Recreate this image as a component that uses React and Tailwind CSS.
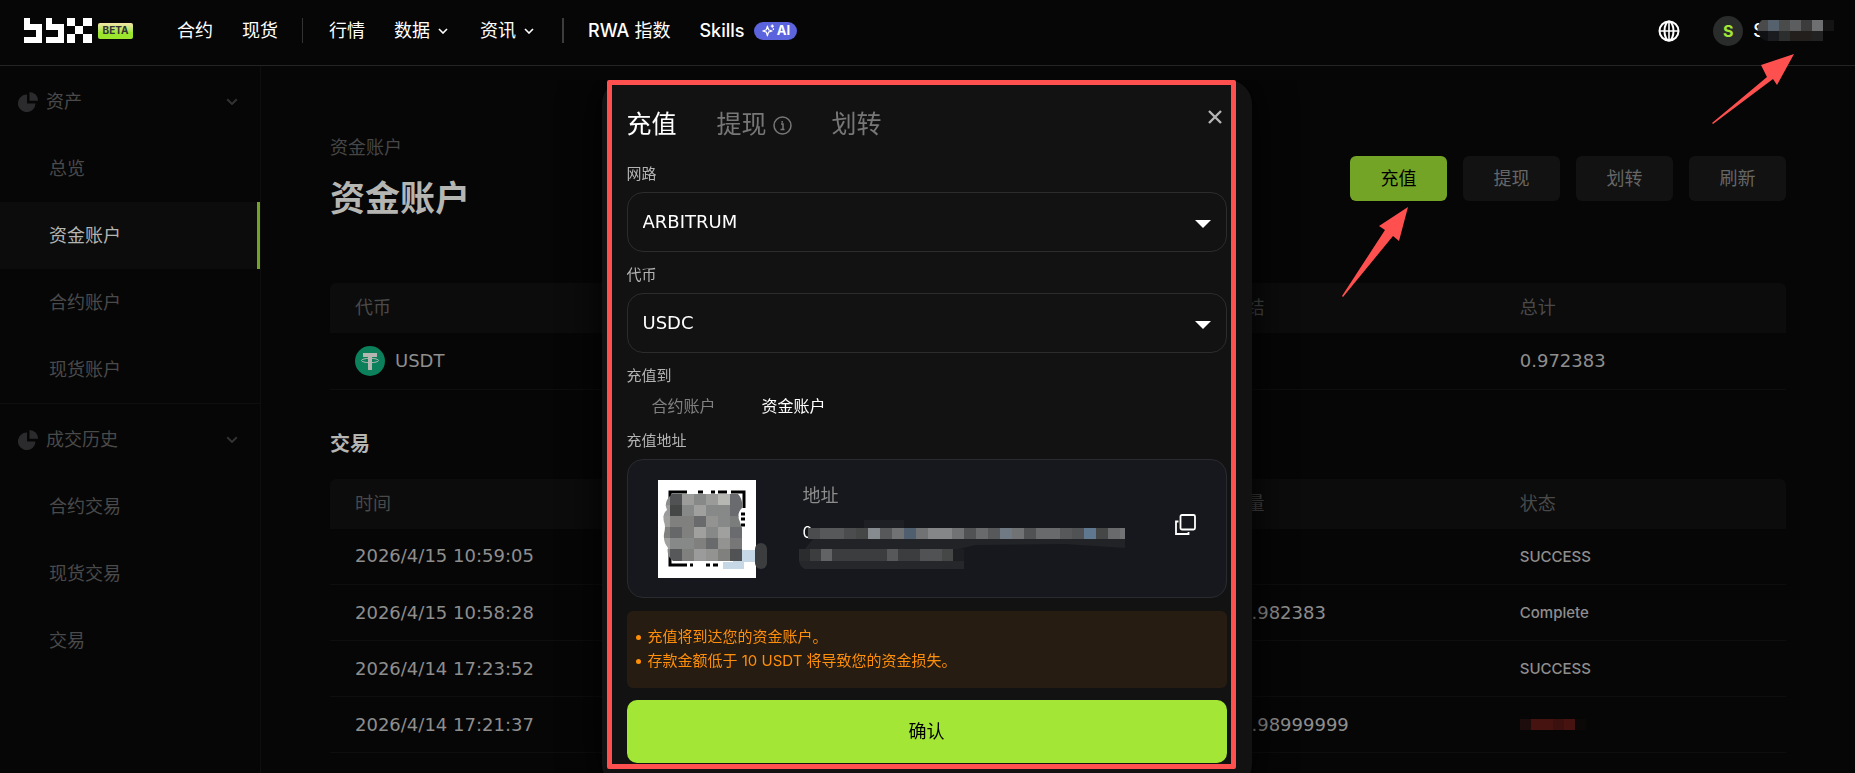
import React, { useState } from "react";

const assetLinks = ["总览", "资金账户", "合约账户", "现货账户"];
const historyLinks = ["合约交易", "现货交易", "交易"];

const records = [
  { time: "2026/4/15 10:59:05", amount: "10", status: "SUCCESS" },
  { time: "2026/4/15 10:58:28", amount: "16.982383", status: "Complete" },
  { time: "2026/4/14 17:23:52", amount: "10", status: "SUCCESS" },
  { time: "2026/4/14 17:21:37", amount: "16.98999999", status: "" },
];

// rows of grey tiles, one shade per tile
const nameTiles = [
  ["#4a4a4a", "#56616e", "#4a4b4b", "#5c5d5e", "#3c3c3c", "#6e6f70", "#141414"],
  ["#101114", "#1b1c20", "#2c2d2d", "#221f1c", "#221f1c", "#222222", "#060606"],
];
const qrTiles = [
  ["#8a8b8b", "#515253", "#9c9d9b", "#878888", "#9b9c9a", "#b6b6b3", "#6a6b6e"],
  ["#9a9b9a", "#454646", "#878888", "#a0a19f", "#878888", "#878888", "#6a6b6e"],
  ["#9fa09e", "#80807e", "#80807e", "#696a6c", "#939492", "#878888", "#7b7c7c"],
  ["#80807e", "#666769", "#80807e", "#a0a19f", "#878888", "#a0a19f", "#6a6b6e"],
  ["#a0a19f", "#878888", "#878888", "#80807e", "#696a6c", "#939492", "#777777"],
  ["#878888", "#57585a", "#80807e", "#9a9b9a", "#939492", "#80807e", "#515253"],
];
const addressTiles = [
  "#4b4c4e", "#57585a", "#57585a", "#4b4c4e", "#454646", "#868b8f", "#57585a",
  "#717274", "#4f5f70", "#717274", "#858687", "#858687", "#717274", "#515253",
  "#696a6c", "#57585a", "#6f7a85", "#717274", "#515253", "#696a6c", "#696a6c",
  "#57585a", "#515253", "#5f7890", "#454646", "#696a6c", "#717274",
];
const addressTiles2 = [
  "#2b2c2e", "#3c3d3e", "#626365", "#3c3d3e", "#3c3d3e", "#3c3d3e", "#3c3d3e",
  "#3c3d3e", "#57585a", "#3c3d3e", "#3c3d3e", "#515253", "#515253", "#454646",
  "#1d1e22",
];

function Tiles({ colors, size, x = 0, y = 0, h = size }) {
  return colors.map((c, i) => (
    <rect key={i} x={x + i * size} y={y} width={size} height={h} fill={c} />
  ));
}

function Logo() {
  return (
    <svg width="68" height="25" viewBox="0 0 68 25" fill="#fff" aria-label="bbx">
      <path d="M0 0h6v6h12v19H0v-6h12v-7H0z" />
      <path d="M22 0h6v6h12v19H22v-6h12v-7H22z" />
      <path d="M43 0h8v8h8V0h9v8h-9v8h9v9h-9v-9h-8v9h-8v-9h8V8h-8z" />
    </svg>
  );
}

function Chevron({ className }) {
  return (
    <svg viewBox="0 0 10 6" fill="none" stroke="currentColor" strokeWidth="1.6" className={className}>
      <path d="M1 1l4 4 4-4" />
    </svg>
  );
}

function Pie() {
  return (
    <svg width="20" height="20" viewBox="0 0 20 20" fill="#2b2b2d">
      <path d="M9 2.5v9h8.5A8.8 8.8 0 1 1 9 2.5z" />
      <path d="M11.500 0A8.500 8.500 0 0 1 20 8.800h-8.500z" />
    </svg>
  );
}

function Header() {
  return (
    <header className="flex h-[66px] items-center border-b border-[#242424] pr-[21px] pb-3.5 pl-6 text-lg text-white">
      <a href="#home" className="mt-2.5 flex items-center">
        <Logo />
        <span className="ml-1.5 flex h-4 w-[35px] items-center justify-center rounded-xs bg-linear-to-b from-[#f5e6a8] to-[#9be52d] to-60% text-[10px] font-bold text-[#333]">
          BETA
        </span>
      </a>
      <nav className="mt-2.5 ml-11 flex items-center">
        <a href="#futures">合约</a>
        <a href="#spot" className="ml-[29px]">现货</a>
        <span className="mr-[26px] ml-6 h-[25px] w-px bg-[#333]" />
        <a href="#markets">行情</a>
        <button className="ml-[29px] flex items-center gap-2">
          数据 <Chevron className="w-2.5" />
        </button>
        <button className="ml-8 flex items-center gap-2">
          资讯 <Chevron className="w-2.5" />
        </button>
        <span className="mr-6 ml-7 h-[25px] w-0.5 bg-[#3c3c3c]" />
        <a href="#rwa">
          <span className="font-medium">RWA</span> 指数
        </a>
        <a href="#skills" className="ml-[29px] flex items-center gap-2.5 font-medium">
          Skills
          <span className="flex h-[18px] w-[43px] items-center justify-center gap-0.5 rounded-full bg-[#5b63dd] text-[13px] font-bold">
            <svg width="13" height="13" viewBox="0 0 24 24" fill="none" stroke="currentColor" strokeWidth="2.2" strokeLinejoin="round">
              <path d="M10 4l2 6.500L18.500 13l-6.500 2L10 22l-2-7-6.500-2L8 10.500z" />
              <path d="M19 1v6M16 4h6M21 8v3" />
            </svg>
            AI
          </span>
        </a>
      </nav>
      <div className="mt-2.5 ml-auto flex items-center">
        <button aria-label="language">
          <svg width="22" height="22" viewBox="0 0 22 22" fill="none" stroke="currentColor" strokeWidth="2">
            <circle cx="11" cy="11" r="9.500" />
            <ellipse cx="11" cy="11" rx="4.500" ry="9.500" />
            <path d="M11 1v20M1.500 11h19" strokeWidth="1.600" />
          </svg>
        </button>
        <span className="ml-[33px] flex size-[30px] items-center justify-center rounded-full bg-[#2a2b2b] text-base font-bold text-[#a3e635]">
          S
        </span>
        <span className="ml-2.5 flex items-center font-medium">
          S
          <svg width="77" height="21" viewBox="0 0 77 21" className="-ml-2">
            <clipPath id="name">
              <path d="M5 0h72v21H10A12 12 0 0 1 5 0z" />
            </clipPath>
            <g clipPath="url(#name)">
              <Tiles colors={nameTiles[0]} size={11} />
              <Tiles colors={nameTiles[1]} size={11} y={11} />
            </g>
          </svg>
        </span>
      </div>
    </header>
  );
}

function SideGroup({ title, links, active }) {
  return (
    <div className="border-b border-[#0e0e0e] pt-0.5 last:border-0">
      <button className="flex h-[67px] w-full items-center gap-2 pr-[22px] pl-[18px]">
        <Pie />
        {title}
        <Chevron className="ml-auto w-3 text-[#333]" />
      </button>
      {links.map((link) => (
        <a
          key={link}
          href={`#${link}`}
          className={
            link === active
              ? "flex h-[67px] items-center border-r-3 border-[#74a426] bg-[#0c0c0c] pl-[49px] text-[#b4b4b2]"
              : "flex h-[67px] items-center pl-[49px]"
          }
        >
          {link}
        </a>
      ))}
    </div>
  );
}

function Tether() {
  return (
    <svg width="30" height="30" viewBox="0 0 30 30">
      <circle cx="15" cy="15" r="15" fill="#0b805b" />
      <path d="M8 7h14v4h-5v13h-4V11H8z" fill="#b5b5b2" />
      <ellipse cx="15" cy="14.500" rx="8.500" ry="2.200" fill="none" stroke="#b5b5b2" />
    </svg>
  );
}

function DataTable({ heads, children }) {
  return (
    <table className="w-full table-fixed text-left font-['DejaVu_Sans','Noto_Sans_CJK_SC',sans-serif] text-[#8e8e8e]">
      <thead>
        <tr className="h-[50px] text-[#4a4a4a]">
          {heads.map((head, i) => (
            <th key={i} className="bg-[#0c0c0c] pl-[25px] font-normal first:rounded-tl-md last:rounded-tr-md">
              {head}
            </th>
          ))}
        </tr>
      </thead>
      <tbody>{children}</tbody>
    </table>
  );
}

function Account() {
  return (
    <main className="flex-1 px-[69px]">
      <div className="flex items-start justify-between pt-[68px]">
        <div>
          <p className="text-[#464646]">资金账户</p>
          <h1 className="mt-[11px] text-[35px]/[50px] font-bold text-[#b5b5b2]">资金账户</h1>
        </div>
        <div className="mt-[22px] flex gap-4 text-[#666]">
          <button className="h-[45px] w-[97px] rounded-md bg-[#74a426] text-black">充值</button>
          <button className="h-[45px] w-[97px] rounded-md bg-[#121212]">提现</button>
          <button className="h-[45px] w-[97px] rounded-md bg-[#121212]">划转</button>
          <button className="h-[45px] w-[97px] rounded-md bg-[#121212]">刷新</button>
        </div>
      </div>

      <div className="mt-[60px]">
        <DataTable heads={["代币", "", "", "冻结", "总计"]}>
          <tr className="h-14 border-b border-[#0e0e0e]">
            <td className="pl-[25px]">
              <div className="flex items-center gap-2.5">
                <Tether />
                USDT
              </div>
            </td>
            <td />
            <td />
            <td />
            <td className="pl-[25px]">0.972383</td>
          </tr>
        </DataTable>
      </div>

      <h2 className="mt-10 mb-[21px] text-xl/7 font-bold text-[#b5b5b2]">交易</h2>
      <DataTable heads={["时间", "", "", "数量", "状态"]}>
        {records.map((record) => (
          <tr key={record.time} className="h-14 border-b border-[#0e0e0e]">
            <td className="pl-[25px]">{record.time}</td>
            <td />
            <td />
            <td className="pl-[25px]">{record.amount}</td>
            <td className="pl-[25px] font-['Inter',sans-serif] text-[15px] font-medium">
              {record.status || (
                <svg width="66" height="11">
                  <Tiles colors={["#1c0c0b", "#471310", "#471310", "#3c100e", "#471310", "#0d0808"]} size={11} />
                </svg>
              )}
            </td>
          </tr>
        ))}
      </DataTable>
    </main>
  );
}

function SelectField({ id, label, options }) {
  return (
    <div>
      <label htmlFor={id} className="block text-[15px]/5 text-[#b3b3b3]">
        {label}
      </label>
      <div className="relative mt-2">
        <select
          id={id}
          className="h-[60px] w-full appearance-none rounded-2xl border border-[#2c2c2c] bg-transparent px-[15px] font-['DejaVu_Sans',sans-serif] text-lg text-white"
        >
          {options.map((option) => (
            <option key={option}>{option}</option>
          ))}
        </select>
        <svg width="16" height="8" viewBox="0 0 16 8" fill="#fff" className="pointer-events-none absolute top-7 right-4">
          <path d="M0 0h16L8 8z" />
        </svg>
      </div>
    </div>
  );
}

function QrCode() {
  return (
    <svg width="109" height="98" viewBox="0 0 109 98" className="shrink-0">
      <path d="M0 0h98v98H0z" fill="#fff" />
      <path
        d="M12 26V12h17M40 12h5M53 12h4M60 12h9M73 12h13v16M12 72v13h17M32 85h3M48 85h4M55 85h5"
        fill="none"
        stroke="#000"
        strokeWidth="3"
      />
      <path d="M83 34h4M83 39h4M83 45h4" stroke="#000" strokeWidth="3" />
      <rect x="97" y="63" width="12" height="26" rx="6" fill="#3c3d3e" />
      <path d="M75 70h22v12H86v7H65v-7h10z" fill="#c6d7e6" />
      <clipPath id="qr">
        <path d="M14 14h66q5 5 4 14-6 6-2 14 4 10 3 20v20H16q-8-6-6-14-5-6-4-14 2-8 0-12-2-8 3-12-4-8 5-16z" />
      </clipPath>
      <g clipPath="url(#qr)">
        {qrTiles.map((row, i) => (
          <Tiles key={i} colors={row} size={12} y={14 + i * 11} />
        ))}
      </g>
    </svg>
  );
}

function DepositDialog() {
  const [target, setTarget] = useState("资金账户");

  return (
    <div className="fixed inset-x-0 top-20 bottom-0 flex items-start justify-center overflow-hidden pr-0.5">
      <section role="dialog" aria-label="充值" className="w-[650px] rounded-3xl bg-[#121212] px-[25px] pb-[25px] shadow-[0_0_40px_#000]">
        <div className="relative pt-[25px]">
          <div className="flex items-start">
            <div className="flex h-10 items-center gap-10 text-[25px] text-[#777]">
              <button className="text-white">充值</button>
              <button className="flex items-center gap-1.5">
                提现
                <svg width="19" height="19" viewBox="0 0 19 19" fill="none" stroke="currentColor" strokeWidth="1.500">
                  <circle cx="9.500" cy="9.500" r="8.500" />
                  <path d="M8 8h2v5M7.500 13.500h4M9.200 5v1.800" />
                </svg>
              </button>
              <button>划转</button>
            </div>
            <button aria-label="close" className="mt-[5px] mr-[5px] ml-auto">
              <svg width="14" height="14" viewBox="0 0 14 14" stroke="#b5b5b5" strokeWidth="2.400">
                <path d="M1 1l12 12M13 1L1 13" />
              </svg>
            </button>
          </div>

          <div className="mt-[19px] flex flex-col gap-[13px]">
            <SelectField id="network" label="网路" options={["ARBITRUM"]} />
            <SelectField id="token" label="代币" options={["USDC"]} />
          </div>

          <fieldset className="mt-[13px]">
            <legend className="text-[15px]/5 text-[#b3b3b3]">充值到</legend>
            <div className="mt-2 flex gap-[46px] pl-[25px] text-base">
              {["合约账户", "资金账户"].map((name) => (
                <label key={name} className={target === name ? "text-white" : "text-[#808080]"}>
                  <input
                    type="radio"
                    name="target"
                    className="sr-only"
                    checked={target === name}
                    onChange={() => setTarget(name)}
                  />
                  {name}
                </label>
              ))}
            </div>
          </fieldset>

          <p className="mt-[13px] text-[15px]/5 text-[#b3b3b3]">充值地址</p>
          <div className="mt-2 flex h-[139px] items-start rounded-2xl border border-[#2a2b2f] bg-[#17181e] px-[30px] pt-5">
            <QrCode />
            <div className="ml-9 text-[#8c8c8c]">
              <p className="text-lg/8">地址</p>
              <p className="mt-2 flex text-base/6 text-white">
                0
                <svg width="326" height="50" viewBox="0 0 326 50" className="-ml-3.5">
                  <Tiles colors={addressTiles} size={12} x={9} y={8} h={11} />
                  <path d="M14 19h312v9l-60-4-90 1-20 5H5z" fill="#222327" />
                  <path d="M65 0h40v8H65z" fill="#1e1f24" />
                  <Tiles colors={addressTiles2} size={11} y={29} h={12} />
                  <path d="M0 41h165v8H6q-5-2-6-8z" fill="#26272a" />
                </svg>
              </p>
            </div>
            <button aria-label="copy" className="mt-[34px] ml-auto">
              <svg width="21" height="21" viewBox="0 0 21 21" fill="none" stroke="#fff" strokeWidth="1.800">
                <rect x="5.500" y="1" width="14.500" height="14.500" rx="1.500" />
                <path d="M3.500 7.500H1v12.500h12.500v-2" />
              </svg>
            </button>
          </div>

          <ul className="mt-[13px] h-[77px] rounded-md bg-[#261c11] pt-3.5 pl-[9px] text-[15px]/6 text-[#ff8f0a]">
            {["充值将到达您的资金账户。", "存款金额低于 10 USDT 将导致您的资金损失。"].map((tip) => (
              <li key={tip} className="flex items-center gap-[7px] before:size-[5px] before:rounded-full before:bg-[#ff8f0a]">
                {tip}
              </li>
            ))}
          </ul>

          <button className="mt-3 h-[63px] w-full rounded-[10px] bg-[#a3e635] text-lg text-black">确认</button>

          <div className="pointer-events-none absolute top-0 -right-[9px] -bottom-1.5 -left-5 rounded-xs border-5 border-[#ff5050]" />
        </div>
      </section>
    </div>
  );
}

function App() {
  return (
    <div className="flex min-h-screen flex-col bg-[#060606] font-['Inter','Noto_Sans_CJK_SC',sans-serif]">
      <Header />
      <div className="flex flex-1 text-lg">
        <aside className="w-[261px] shrink-0 border-r border-[#0e0e0e] text-[#4a4a4a]">
          <SideGroup title="资产" links={assetLinks} active="资金账户" />
          <SideGroup title="成交历史" links={historyLinks} />
        </aside>
        <Account />
      </div>
      <DepositDialog />
      <svg width="82" height="70" viewBox="0 0 82 70" fill="#ff5050" className="absolute top-[54px] right-[61px]">
        <path d="M82 0L65 31l-4-6L1 70l-1-1 55-46-6-12z" />
      </svg>
      <svg width="66" height="90" viewBox="0 0 66 90" fill="#ff5050" className="absolute top-[207px] right-[447px]">
        <path d="M66 0l-9 34-6-5L1 90l-1-1 43-66-6-4z" />
      </svg>
    </div>
  );
}

export default App;
